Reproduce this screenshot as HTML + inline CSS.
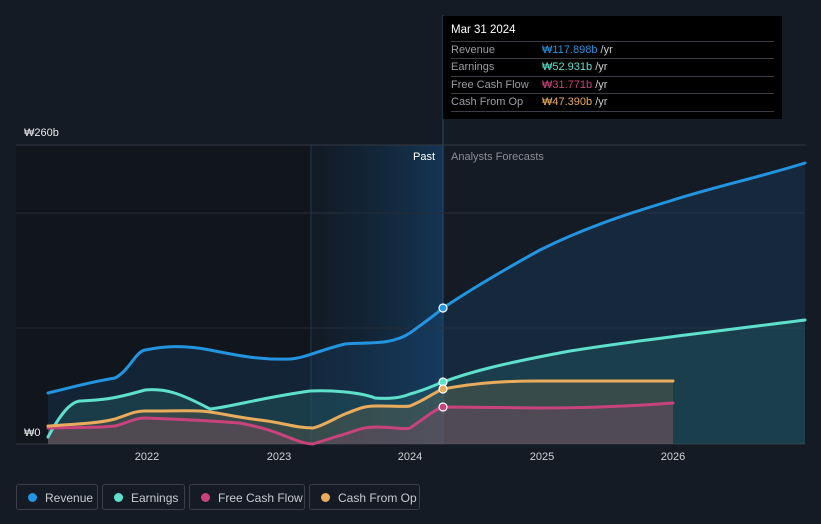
<!DOCTYPE html>
<html><head><meta charset="utf-8"><style>
body{margin:0;width:821px;height:524px;background:#151b25;overflow:hidden;font-family:"Liberation Sans","Noto Sans CJK KR",sans-serif}
svg{position:absolute;left:0;top:0}
.tt{position:absolute;left:443px;top:16px;width:339px;height:103px;background:#000;color:#fff;font-size:11px}
.tt .h{position:absolute;left:8px;top:8px;font-size:11.5px}
.row{position:absolute;left:8px;width:323px;height:17px;border-top:1px solid #3a3d44;color:#9a9ca2;line-height:17px}
.row span{position:absolute;left:91px}
.row i{font-style:normal;color:#ccc}
.leg{position:absolute;top:484px;height:26px;border:1px solid #3a3f4a;border-radius:3px;color:#c8cad0;font-size:12px;line-height:26px;box-sizing:border-box}
.leg b{position:absolute;left:11px;top:8px;width:9px;height:9px;border-radius:50%}
.leg span{position:absolute;left:28px}
</style></head><body>
<svg width="821" height="524">
<defs>
<linearGradient id="hl" x1="0" x2="1"><stop offset="0" stop-color="#143048" stop-opacity="0.2"/><stop offset="1" stop-color="#15385a" stop-opacity="0.9"/></linearGradient>
</defs>
<rect x="16" y="145" width="427" height="299" fill="#11151c"/>
<rect x="311" y="145" width="132" height="299" fill="url(#hl)"/>
<line x1="311" y1="145" x2="311" y2="444" stroke="#1f3a50" stroke-width="1"/>
<line x1="443" y1="15" x2="443" y2="444" stroke="#2a4a66" stroke-width="1"/>
<line x1="16" y1="145" x2="805" y2="145" stroke="#333944"/>
<line x1="16" y1="213" x2="805" y2="213" stroke="#262c36"/>
<line x1="16" y1="328" x2="805" y2="328" stroke="#262c36"/>
<line x1="16" y1="444" x2="805" y2="444" stroke="#333944"/>
<path d="M48,393 C70,388 85,383 115,378 C130,370 135,352 145,350 C165,346 185,345 210,350 C240,356 260,360 290,359 C305,358 320,350 345,344 C365,342 390,346 410,333 C425,322 435,315 443,308 C470,290 500,272 540,250 C580,230 620,216 670,201 C710,188 760,177 805,163 L805,444 L48,444Z" fill="#1a4a73" fill-opacity="0.3"/>
<path d="M48,437 C60,415 70,402 80,401 C100,400 110,400 145,390 C165,388 180,393 210,409 C230,407 260,398 310,391 C330,390 360,392 375,398 C390,399 400,398 410,394 C425,390 435,385 443,382 C470,372 500,364 570,351 C620,343 670,337 805,320 L805,444 L48,444Z" fill="#2a7a78" fill-opacity="0.28"/>
<path d="M48,426 C80,424 100,423 115,419 C130,414 135,411 145,411 C180,411 200,410 210,412 C225,414 235,417 260,420 C280,422 295,428 313,428 C325,425 335,418 345,414 C360,408 365,406 375,406 C395,406 405,407 410,406 C425,400 435,392 443,389 C480,382 510,381 540,381 L673,381 L673,444 L48,444Z" fill="#7a6a4a" fill-opacity="0.3"/>
<path d="M48,428 C80,427 100,428 115,426 C130,422 135,418 145,418 C175,419 200,420 240,423 C260,427 270,430 280,434 C295,440 305,444 313,444 C325,440 335,437 345,434 C360,429 365,427 375,427 C395,427 405,430 410,428 C425,418 435,409 443,407 L540,408 C580,408 620,407 673,403 L673,444 L48,444Z" fill="#8a4a6a" fill-opacity="0.3"/>
<g fill="none" stroke-width="3" stroke-linecap="round">
<path d="M48,393 C70,388 85,383 115,378 C130,370 135,352 145,350 C165,346 185,345 210,350 C240,356 260,360 290,359 C305,358 320,350 345,344 C365,342 390,346 410,333 C425,322 435,315 443,308 C470,290 500,272 540,250 C580,230 620,216 670,201 C710,188 760,177 805,163" stroke="#2394e0"/>
<path d="M48,437 C60,415 70,402 80,401 C100,400 110,400 145,390 C165,388 180,393 210,409 C230,407 260,398 310,391 C330,390 360,392 375,398 C390,399 400,398 410,394 C425,390 435,385 443,382 C470,372 500,364 570,351 C620,343 670,337 805,320" stroke="#5ee0cc"/>
<path d="M48,428 C80,427 100,428 115,426 C130,422 135,418 145,418 C175,419 200,420 240,423 C260,427 270,430 280,434 C295,440 305,444 313,444 C325,440 335,437 345,434 C360,429 365,427 375,427 C395,427 405,430 410,428 C425,418 435,409 443,407 L540,408 C580,408 620,407 673,403" stroke="#c8437c"/>
<path d="M48,426 C80,424 100,423 115,419 C130,414 135,411 145,411 C180,411 200,410 210,412 C225,414 235,417 260,420 C280,422 295,428 313,428 C325,425 335,418 345,414 C360,408 365,406 375,406 C395,406 405,407 410,406 C425,400 435,392 443,389 C480,382 510,381 540,381 L673,381" stroke="#e8ac5c"/>
</g>
<g stroke="#fff" stroke-width="1.2">
<circle cx="443" cy="308" r="4" fill="#2394e0"/>
<circle cx="443" cy="382" r="4" fill="#5ee0cc"/>
<circle cx="443" cy="389" r="4" fill="#e8ac5c"/>
<circle cx="443" cy="407" r="4" fill="#c8437c"/>
</g>
<g font-family="Liberation Sans, Noto Sans CJK KR, sans-serif" font-size="11">
<text x="24" y="136" fill="#e8e8e8">₩260b</text>
<text x="24" y="436" fill="#e8e8e8">₩0</text>
<text x="435" y="160" fill="#fff" text-anchor="end">Past</text>
<text x="451" y="160" fill="#8a8e96">Analysts Forecasts</text>
<g fill="#d0d2d6" text-anchor="middle" font-size="11">
<text x="147" y="460">2022</text><text x="279" y="460">2023</text><text x="410" y="460">2024</text><text x="542" y="460">2025</text><text x="673" y="460">2026</text>
</g></g>
</svg>
<div class="tt"><div class="h">Mar 31 2024</div>
<div class="row" style="top:25px">Revenue<span style="color:#2394e0">₩117.898b <i>/yr</i></span></div>
<div class="row" style="top:42px">Earnings<span style="color:#5ee0cc">₩52.931b <i>/yr</i></span></div>
<div class="row" style="top:60px">Free Cash Flow<span style="color:#c8437c">₩31.771b <i>/yr</i></span></div>
<div class="row" style="top:77px;border-bottom:1px solid #3a3d44">Cash From Op<span style="color:#e8ac5c">₩47.390b <i>/yr</i></span></div>
</div>
<div class="leg" style="left:16px;width:82px"><b style="background:#2394e0"></b><span>Revenue</span></div>
<div class="leg" style="left:102px;width:83px"><b style="background:#5ee0cc"></b><span>Earnings</span></div>
<div class="leg" style="left:189px;width:116px"><b style="background:#c8437c"></b><span>Free Cash Flow</span></div>
<div class="leg" style="left:309px;width:111px"><b style="background:#e8ac5c"></b><span>Cash From Op</span></div>
</body></html>
